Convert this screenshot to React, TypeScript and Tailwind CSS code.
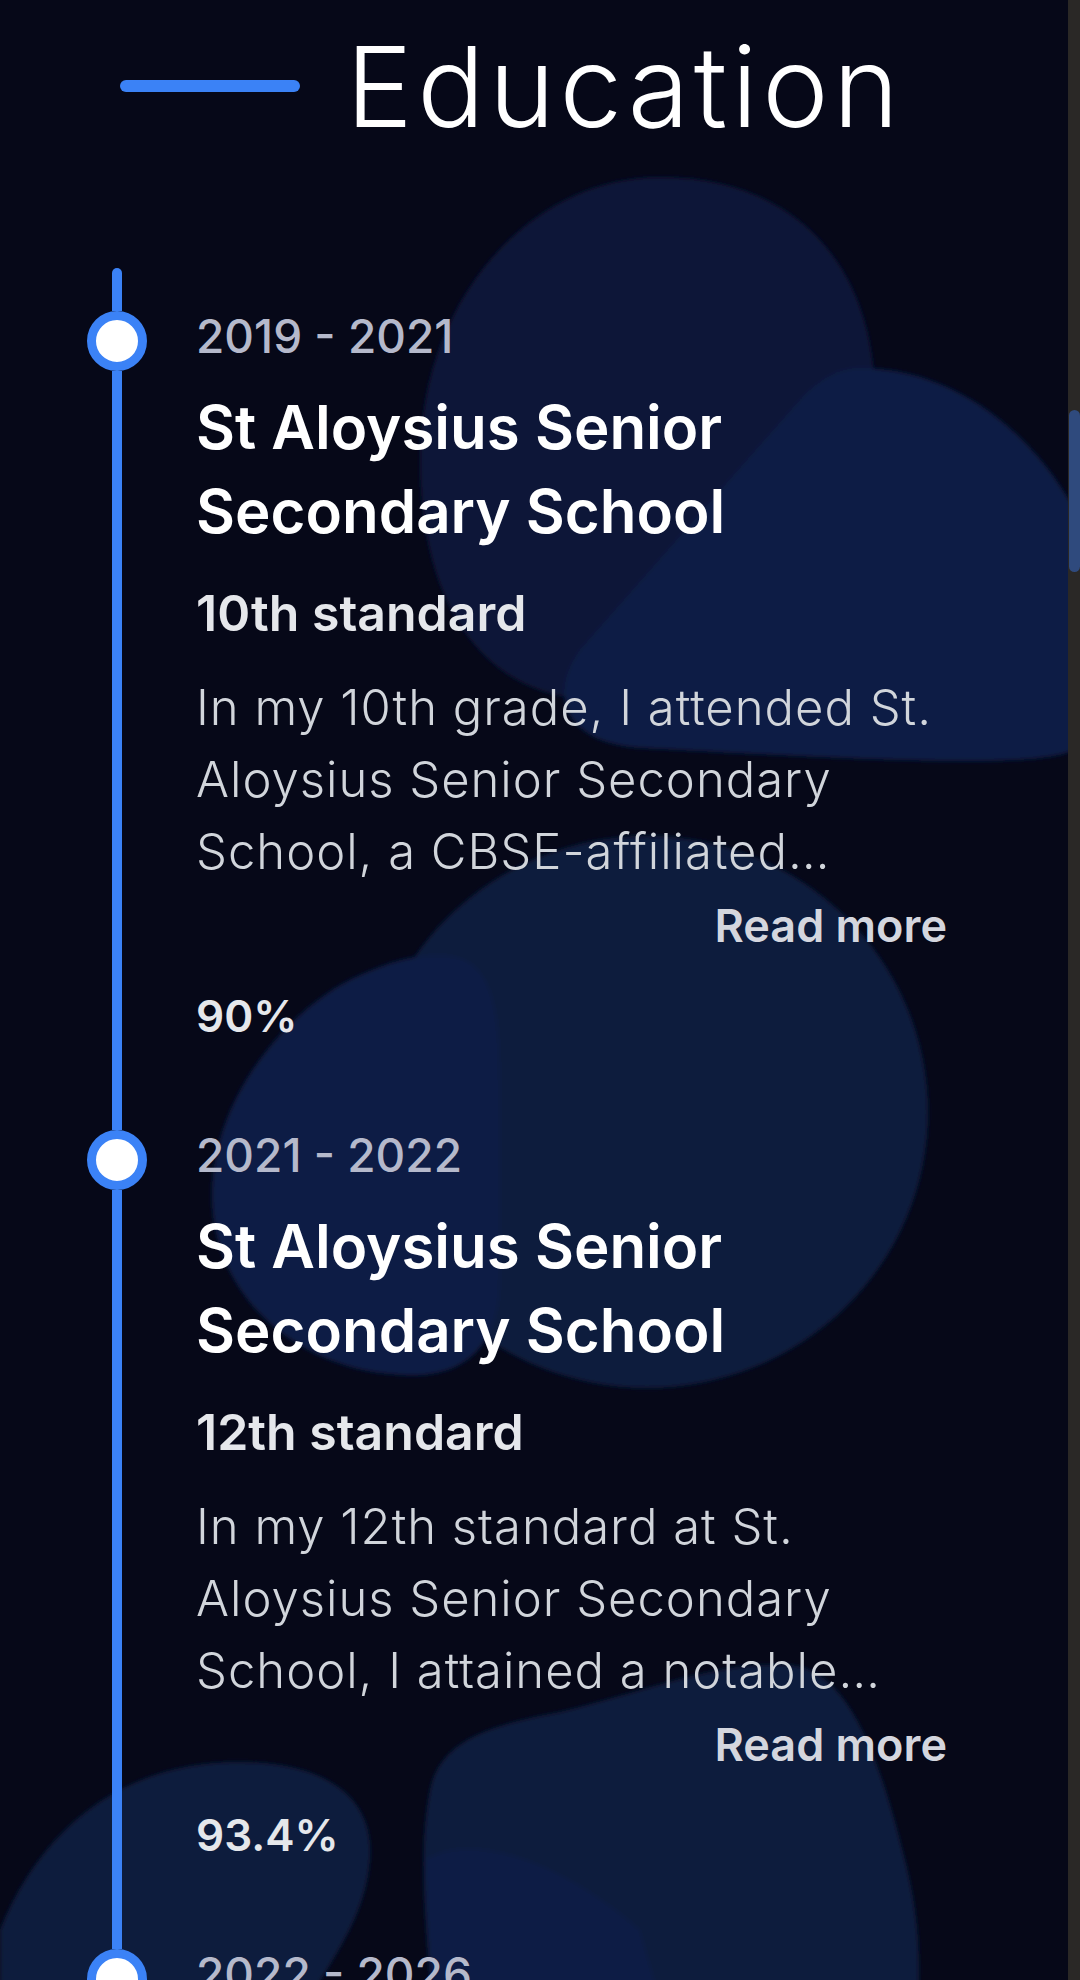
import React from "react";

type Item = {
  years: string;
  school: string;
  level: string;
  desc: string;
  score: string;
};

const items: Item[] = [
  {
    years: "2019 - 2021",
    school: "St Aloysius Senior Secondary School",
    level: "10th standard",
    desc: "In my 10th grade, I attended St. Aloysius Senior Secondary School, a CBSE-affiliated institution where I built a strong foundation in science and mathematics.",
    score: "90%",
  },
  {
    years: "2021 - 2022",
    school: "St Aloysius Senior Secondary School",
    level: "12th standard",
    desc: "In my 12th standard at St. Aloysius Senior Secondary School, I attained a notable percentage in the CBSE board examinations.",
    score: "93.4%",
  },
  {
    years: "2022 - 2026",
    school: "Bachelor of Technology",
    level: "Computer Science",
    desc: "Pursuing my undergraduate degree in computer science and engineering.",
    score: "",
  },
];

function Blobs() {
  return (
    <svg
      className="absolute inset-0 w-[1068px] h-[1980px] pointer-events-none"
      viewBox="0 0 1068 1980"
      xmlns="http://www.w3.org/2000/svg"
    >
      <defs>
        <filter id="soft" x="-10%" y="-10%" width="120%" height="120%">
          <feGaussianBlur stdDeviation="2" />
        </filter>
      </defs>
      <g filter="url(#soft)">
        <path fill="#0d1838" d="M 660 177 C 790 177, 875 260, 875 400 C 875 560, 760 700, 600 700 C 480 700, 420 600, 420 460 C 420 300, 530 177, 660 177 Z" />
        <path fill="#0f1d45" d="M 860 368 C 960 368, 1040 440, 1080 520 L 1080 745 C 1060 770, 900 762, 640 748 C 570 744, 545 700, 580 650 L 800 400 C 820 378, 840 368, 860 368 Z" />
        <ellipse fill="#0e1a3e" cx="647" cy="1112" rx="281" ry="276" />
        <path fill="#0f1c44" d="M 440 955 C 490 955, 500 1000, 500 1080 L 500 1280 C 500 1350, 460 1380, 400 1375 C 300 1370, 215 1300, 212 1200 C 210 1090, 300 1000, 360 975 C 390 962, 410 955, 440 955 Z" />
        <path fill="#0e1a3c" d="M 0 1930 C 40 1830, 120 1765, 230 1762 C 330 1760, 375 1800, 370 1860 C 365 1920, 330 1960, 310 2000 L 0 2000 Z" />
        <path fill="#0e1a3c" d="M 560 1712 C 650 1690, 720 1660, 790 1665 C 850 1670, 880 1760, 905 1860 C 920 1920, 920 1960, 918 2000 L 432 2000 C 425 1920, 418 1850, 430 1790 C 440 1740, 490 1725, 560 1712 Z" />
        <path fill="#0f1d45" d="M 425 1860 C 470 1830, 560 1860, 640 1930 L 660 2000 L 432 2000 Z" />
      </g>
    </svg>
  );
}

function TimelineItem({ item, first }: { item: Item; first: boolean }) {
  return (
    <div className="flex">
      <div className="ml-[87px] w-[60px] shrink-0 flex flex-col items-center">
        <div
          className={
            first
              ? "w-[10px] h-[43px] bg-[#3b82f6] rounded-t-full"
              : "w-[10px] h-[43px] bg-[#3b82f6]"
          }
        />
        <div className="w-[60px] h-[60px] shrink-0 rounded-full border-[9px] border-[#3b82f6] bg-white" />
        <div className="w-[10px] flex-1 bg-[#3b82f6]" />
      </div>
      <div className="ml-[49px] w-[751px] pt-[38px] pb-[39px]">
        <div className="text-[46px] leading-[60px] font-medium text-[#b5b9cb]">
          {item.years}
        </div>
        <h3 className="mt-[19px] text-[60px] leading-[84px] font-semibold text-white">
          {item.school}
        </h3>
        <div className="mt-[28px] text-[50px] leading-[64px] font-semibold text-[#e5e7eb]">
          {item.level}
        </div>
        <p className="mt-[27px] text-[49px] leading-[72px] font-light tracking-[0.02em] text-[#d1d5db] line-clamp-3">
          {item.desc}
        </p>
        <div className="mt-[10px] text-right text-[45px] leading-[56px] font-semibold text-[#d4d6de]">
          Read more
        </div>
        <div className="mt-[30px] text-[44px] leading-[64px] font-semibold text-[#e5e7eb]">
          {item.score}
        </div>
      </div>
    </div>
  );
}

export default function App() {
  return (
    <div className="w-[1080px] h-[1980px] overflow-hidden flex bg-[#060818] font-[family-name:Inter,sans-serif]">
      <div className="relative w-[1068px] h-[1980px] overflow-hidden">
        <Blobs />
        <div className="relative">
          <div className="flex items-center pl-[120px] pt-[32px]">
            <div className="w-[180px] h-[12px] rounded-full bg-[#3b82f6]" />
            <h2 className="ml-[46px] text-[112px] leading-[108px] font-light text-white tracking-[0.04em]">
              Education
            </h2>
          </div>
          <div className="mt-[128px] flex flex-col">
            {items.map((it, i) => (
              <TimelineItem key={i} item={it} first={i === 0} />
            ))}
          </div>
        </div>
      </div>
      <div className="w-[12px] h-[1980px] bg-[#2a2826] flex flex-col">
        <div className="mt-[410px] ml-[1px] w-[11px] h-[162px] rounded-full bg-[#2f4a7d]" />
      </div>
    </div>
  );
}
